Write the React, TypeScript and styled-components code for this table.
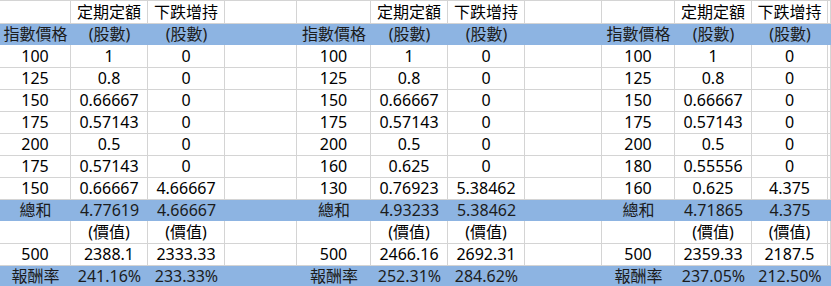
import styled, { createGlobalStyle } from "styled-components";

const GlobalStyle = createGlobalStyle`
  html, body {
    margin: 0;
    padding: 0;
    background: #fff;
  }
  body {
    font-family: "Noto Sans", "Noto Sans CJK TC", sans-serif;
  }
`;

// column widths read off the sheet (A..K plus the bit of L on the right)
const COLS = "71px 77px 77px 72px 74px 77px 77px 77px 73px 77px 76px 1fr";

const Sheet = styled.div`
  width: 831px;
  height: 286px;
  overflow: hidden;
  background: #fff;
`;

const Row = styled.div<{ $band?: boolean; $first?: boolean }>`
  display: grid;
  grid-template-columns: ${COLS};
  height: ${(p) => (p.$first ? 23 : 22)}px;
  background: ${(p) => (p.$band ? "#8db4e2" : "#fff")};
  border-top: ${(p) => (p.$first ? "1px solid #d4d4d4" : "none")};
  box-sizing: border-box;
`;

const Cell = styled.div<{ $band?: boolean }>`
  box-sizing: border-box;
  height: 100%;
  display: flex;
  align-items: center;
  justify-content: center;
  font-size: 16px;
  line-height: 22px;
  color: ${(p) => (p.$band ? "#1c1c1c" : "#000")};
  white-space: nowrap;
  overflow: visible;
  border-right: ${(p) => (p.$band ? "none" : "1px solid #d4d4d4")};
  border-bottom: ${(p) => (p.$band ? "none" : "1px solid #d4d4d4")};
`;

type Triple = [string, string, string];

interface Block {
  prices: Triple[];
  total: Triple;
  value: Triple;
  ret: Triple;
}

const blocks: Block[] = [
  {
    prices: [
      ["100", "1", "0"],
      ["125", "0.8", "0"],
      ["150", "0.66667", "0"],
      ["175", "0.57143", "0"],
      ["200", "0.5", "0"],
      ["175", "0.57143", "0"],
      ["150", "0.66667", "4.66667"],
    ],
    total: ["總和", "4.77619", "4.66667"],
    value: ["500", "2388.1", "2333.33"],
    ret: ["報酬率", "241.16%", "233.33%"],
  },
  {
    prices: [
      ["100", "1", "0"],
      ["125", "0.8", "0"],
      ["150", "0.66667", "0"],
      ["175", "0.57143", "0"],
      ["200", "0.5", "0"],
      ["160", "0.625", "0"],
      ["130", "0.76923", "5.38462"],
    ],
    total: ["總和", "4.93233", "5.38462"],
    value: ["500", "2466.16", "2692.31"],
    ret: ["報酬率", "252.31%", "284.62%"],
  },
  {
    prices: [
      ["100", "1", "0"],
      ["125", "0.8", "0"],
      ["150", "0.66667", "0"],
      ["175", "0.57143", "0"],
      ["200", "0.5", "0"],
      ["180", "0.55556", "0"],
      ["160", "0.625", "4.375"],
    ],
    total: ["總和", "4.71865", "4.375"],
    value: ["500", "2359.33", "2187.5"],
    ret: ["報酬率", "237.05%", "212.50%"],
  },
];

interface SheetRow {
  band?: boolean;
  cells: (b: Block) => Triple;
}

const rows: SheetRow[] = [
  { cells: () => ["", "定期定額", "下跌增持"] },
  { band: true, cells: () => ["指數價格", "(股數)", "(股數)"] },
  ...Array.from({ length: 7 }, (_, i) => ({
    cells: (b: Block) => b.prices[i],
  })),
  { band: true, cells: (b) => b.total },
  { cells: () => ["", "(價值)", "(價值)"] },
  { cells: (b) => b.value },
  { band: true, cells: (b) => b.ret },
];

const App = () => (
  <>
    <GlobalStyle />
    <Sheet>
      {rows.map((row, r) => (
        <Row key={r} $band={row.band} $first={r === 0}>
          {blocks.flatMap((b, bi) => [
            ...row.cells(b).map((text, ci) => (
              <Cell key={`${bi}-${ci}`} $band={row.band}>
                {text}
              </Cell>
            )),
            <Cell key={`${bi}-gap`} $band={row.band} />,
          ])}
        </Row>
      ))}
    </Sheet>
  </>
);

export default App;
